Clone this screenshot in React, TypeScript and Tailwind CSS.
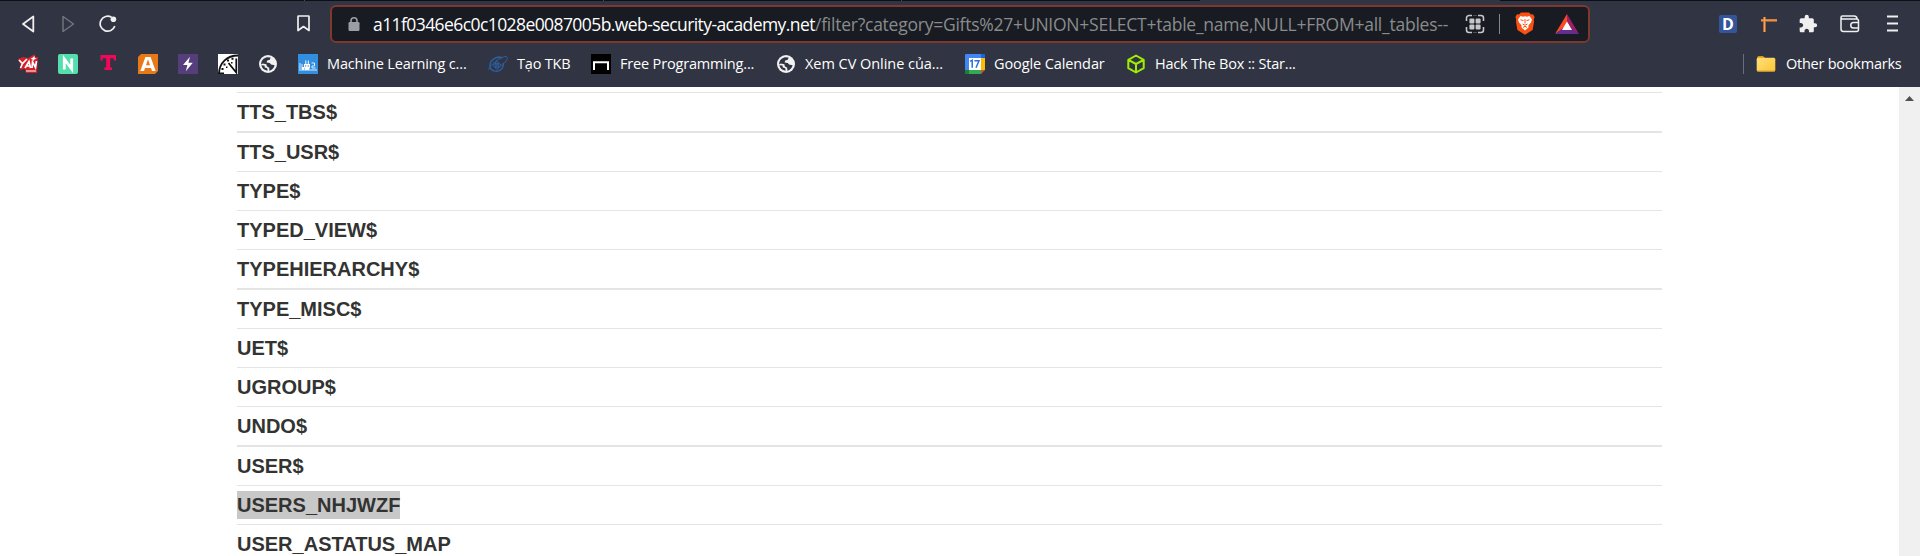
import React from "react";

const ui = "font-['Open_Sans','Noto_Sans',sans-serif]";

function Globe() {
  return (
    <svg width="20" height="20" viewBox="0 0 20 20" className="block">
      <circle cx="10" cy="10" r="9" fill="#f1f1f1" />
      <path d="M8.8 3.2L12.6 3.6 11.8 5.8 9.2 6.6 8.6 8.6 11.8 9 13 10.6 16.6 11.2C16 14 14 16 11.4 16.8L11.2 13.8 8.8 12.2 8.4 10.2 4.8 9.6 3.1 10.4C3.2 6.4 5.6 4 8.8 3.2Z" fill="#313442" />
      <path d="M3.3 11.2C4 14 6.2 16.2 9.6 16.8L9.2 14.2 6.8 13.4 6.4 11.4Z" fill="#313442" />
    </svg>
  );
}

function Yan() {
  return (
    <svg width="20" height="20" viewBox="0 0 20 20" className="block">
      <path d="M0 5L5 3 10 4 17 0 16 3 20 3 19 19 8 19 7 15 1 16 3 12Z" fill="#d3202b" />
      <path d="M1 6L4.5 9.5 9 5M4.5 9.5L2.5 14M7 14L11 7.500 12.500 14M8.500 12H12M14 14L14.500 8 17.500 13.500 18.500 7" fill="none" stroke="#fff" strokeWidth="1.7" />
      <path d="M12.500 4.500L15 3.500 16.500 1.500 16.800 4 18.800 4.800 16.200 5.600 15 7.400 14.500 5.200ZM8 16.600H18V17.600H8Z" fill="#fff" />
    </svg>
  );
}
function LetterN() {
  return (
    <svg width="20" height="20" viewBox="0 0 20 20" className="block">
      <rect width="20" height="20" rx="2" fill="#55dfad" />
      <path d="M6.300 15.500V5L13.700 15V4.500" fill="none" stroke="#fff" strokeWidth="2.8" />
    </svg>
  );
}
function MarkT() {
  return (
    <svg width="20" height="20" viewBox="0 0 20 20" className="block">
      <path d="M2.500 1H18V6.500H15.800V4.300H12.200V13.500H14V16H6.400V13.500H8.200V4.300H4.600V6.500H2.500Z" fill="#f50658" />
    </svg>
  );
}
function MarkA() {
  return (
    <svg width="20" height="20" viewBox="0 0 20 20" className="block">
      <path d="M3 0H20V17L17 20H0V3Z" fill="#e97817" />
      <path d="M6 17H2.300L7.400 3H12.600L17.700 17H14L13 14H7ZM8 11.200H12L10 5.200Z" fill="#fff" fillRule="evenodd" />
    </svg>
  );
}
function Bolt() {
  return (
    <svg width="20" height="20" viewBox="0 0 20 20" className="block">
      <rect width="20" height="20" fill="#563d7c" />
      <path d="M12 2.800L5 11H9.400L7.800 17.200 14.800 8.800H10.400Z" fill="#fff" />
    </svg>
  );
}
function Dial() {
  return (
    <svg width="20" height="20" viewBox="0 0 20 20" className="block">
      <rect width="20" height="20" fill="#fff" />
      <path d="M1 20C1 9 9 1.500 20 1.500" fill="none" stroke="#111" strokeWidth="1.8" />
      <path d="M10.500 9L18.300 18.500V4.500" fill="none" stroke="#111" strokeWidth="1.8" />
      <path d="M5.500 9.500H7.500V11.500H5.500ZM9 5.500H11V7.500H9ZM13.500 3.700H15.500V5.700H13.500ZM3.500 14H5.500V16H3.500ZM8 12.500H9.500V14H8ZM13 8H14.500V9.500H13ZM0 18.500H6V20H0Z" fill="#111" />
    </svg>
  );
}
function Robots() {
  return (
    <svg width="20" height="20" viewBox="0 0 20 20" className="block">
      <rect width="20" height="20" fill="#328fe0" />
      <path d="M2 9V15M4 10V15M13.500 9H16.500V12H14V14H17.500M1 16H19" stroke="#d9ecfc" strokeWidth="1" fill="none" />
      <path d="M6 10H12V13L11 16H7L6 13ZM7.300 6.500H8.300V10H7.300ZM9.800 6.500H10.800V10H9.800ZM4 13H6V16H4Z" fill="#fff" />
      <circle cx="7.700" cy="12" r=".7" fill="#328fe0" /><circle cx="10.300" cy="12" r=".7" fill="#328fe0" />
    </svg>
  );
}
function Orbit() {
  return (
    <svg width="20" height="20" viewBox="0 0 20 20" className="block" fill="none" stroke="#2d5f9f">
      <path d="M14.500 4.200C9 1 2 6 2 11.500 2 17 9 19 13 15.500 15 13.800 15.500 11.500 15 9" strokeWidth="1.500" />
      <path d="M1 16C-1 13 15 0 19 3 20.500 4.500 17 9 13 12" strokeWidth="1" />
      <ellipse cx="9" cy="11.300" rx="4" ry="2" strokeWidth="1" />
      <ellipse cx="9" cy="11.300" rx="2" ry="4" strokeWidth="1" />
      <circle cx="9" cy="11.300" r="1" />
    </svg>
  );
}
function Desk() {
  return (
    <svg width="20" height="20" viewBox="0 0 20 20" className="block">
      <rect width="20" height="20" fill="#000" />
      <path d="M3 16V8.300H17V16" fill="none" stroke="#fff" strokeWidth="2" />
    </svg>
  );
}
function Calendar() {
  return (
    <svg width="20" height="20" viewBox="0 0 20 20" className="block">
      <rect width="20" height="20" rx="1" fill="#4285f4" />
      <rect x="16" width="4" height="4" fill="#1967d2" />
      <rect x="16" y="4" width="4" height="12" fill="#fbbc04" />
      <rect y="16" width="16" height="4" fill="#34a853" />
      <rect y="16" width="4" height="4" fill="#188038" />
      <path d="M16 16H20L16 20Z" fill="#ea4335" />
      <path d="M20 16V20H16Z" fill="#313442" />
      <rect x="4" y="4" width="12" height="12" fill="#fff" />
      <path d="M5 7.400L7.200 6.300V13.800M9.400 6.800H14L11 13.800" fill="none" stroke="#2b6fd8" strokeWidth="1.500" />
    </svg>
  );
}
function Cube() {
  return (
    <svg width="20" height="20" viewBox="0 0 20 20" className="block" fill="none" stroke="#9fef00" strokeWidth="2" strokeLinejoin="round">
      <path d="M10 1.500L17.700 5.800V14.200L10 18.500 2.300 14.200V5.800ZM2.300 5.800L10 10 17.700 5.800M10 10V18.500" />
    </svg>
  );
}
function Folder() {
  return (
    <svg width="20" height="20" viewBox="0 0 20 20" className="block">
      <defs><linearGradient id="fold" x2="1" y2="1"><stop stopColor="#ffe07a" /><stop offset="1" stopColor="#fcc535" /></linearGradient></defs>
      <path d="M1 4Q1 2 3 2H7L9 4H17V8H1Z" fill="#dd9b0b" />
      <rect x=".7" y="3.800" width="18.600" height="13.700" rx="1.500" fill="url(#fold)" />
      <path d="M1.500 17H18.500" stroke="#d9a32a" />
    </svg>
  );
}

const icons = [Yan, LetterN, MarkT, MarkA, Bolt, Dial, Globe];
const bookmarks = [
  { Icon: Robots, label: "Machine Learning c...", cell: "w-[190px]", sp: "tracking-[-0.14px]" },
  { Icon: Orbit, label: "Tạo TKB", cell: "w-[103px]", sp: "tracking-[-0.2px]" },
  { Icon: Desk, label: "Free Programming...", cell: "w-[185px]", sp: "tracking-[-0.17px]" },
  { Icon: Globe, label: "Xem CV Online của...", cell: "w-[189px]", sp: "tracking-[-0.04px]" },
  { Icon: Calendar, label: "Google Calendar", cell: "w-[161px]", sp: "tracking-[-0.1px]" },
  { Icon: Cube, label: "Hack The Box :: Star...", cell: "w-[190px]", sp: "tracking-[-0.2px]" },
];

const rows = [
  { name: "TTS_TBS$", cls: "h-[39px] border-t" },
  { name: "TTS_USR$", cls: "h-[40px] border-t-2" },
  { name: "TYPE$", cls: "h-[39px] border-t" },
  { name: "TYPED_VIEW$", cls: "h-[39px] border-t" },
  { name: "TYPEHIERARCHY$", cls: "h-[39px] border-t" },
  { name: "TYPE_MISC$", cls: "h-[40px] border-t-2" },
  { name: "UET$", cls: "h-[39px] border-t" },
  { name: "UGROUP$", cls: "h-[39px] border-t" },
  { name: "UNDO$", cls: "h-[39px] border-t" },
  { name: "USER$", cls: "h-[40px] border-t-2" },
  { name: "USERS_NHJWZF", cls: "h-[39px] border-t", selected: true },
  { name: "USER_ASTATUS_MAP", cls: "h-[39px] border-t" },
];

function AddressBar() {
  return (
    <div className="flex h-[38px] w-[1260px] shrink-0 items-center rounded-[6px] border-2 border-[#7b392f] bg-[#181b22]">
      <svg width="12" height="14" viewBox="0 0 12 14" className="ml-[16px] shrink-0">
        <path d="M3 6V3.800a3 3 0 016 0V6" fill="none" stroke="#9c9ea6" strokeWidth="1.600" />
        <rect x=".5" y="5" width="11" height="9" rx="1.200" fill="#9c9ea6" />
      </svg>
      <div className={`ml-[13px] flex h-[30px] w-[1091px] shrink-0 items-center whitespace-pre text-[17.5px] leading-[30px] ${ui}`}>
        <span className="w-[442px] shrink-0 tracking-[-0.58px] text-white">a11f0346e6c0c1028e0087005b.web-security-academy.net</span>
        <span className="tracking-[-0.24px] text-[#8a8b8c]">/filter?category=Gifts%27+UNION+SELECT+table_name,NULL+FROM+all_tables--</span>
      </div>
      <svg width="20" height="20" viewBox="0 0 20 20" className="ml-[1px] shrink-0">
        <path d="M1.500 7V4a2.500 2.500 0 012.500-2.500H7M13 1.500H16a2.500 2.500 0 012.500 2.500V7M18.500 13V16a2.500 2.500 0 01-2.500 2.500H13M7 18.500H4a2.500 2.500 0 01-2.500-2.500V13" fill="none" stroke="#c6c7c9" strokeWidth="1.600" />
        <path d="M8.700 1.500H9.300M10.700 1.500H11.300M8.700 18.500H9.300M10.700 18.500H11.300" stroke="#c6c7c9" strokeWidth="1.200" />
        <g fill="#c6c7c9">
          <rect x="4.400" y="4.400" width="5" height="5" rx="1" />
          <rect x="10.600" y="4.400" width="5" height="5" rx="1" />
          <rect x="4.400" y="10.600" width="5" height="5" rx="1" />
          <rect x="10.600" y="10.600" width="5" height="5" rx="1" />
        </g>
      </svg>
      <div className="ml-[14px] h-5 w-px shrink-0 bg-[#85878c]" />
      <svg width="20" height="23" viewBox="0 0 20 23" className="ml-[15px] shrink-0">
        <path d="M6 .5H14L16 2.500 18 2.300 19.600 5 18.800 7.500 19 10 17.600 18 10 22.700 2.400 18 1 10 1.200 7.500 .4 5 2 2.300 4 2.500Z" fill="#fb5012" />
        <path d="M5.500 4L8 4.800 10 4.200 12 4.800 14.500 4 17 7.500 16 10.500 13.500 13.200 13.500 15.500 10 18.500 6.500 15.500 6.500 13.200 4 10.500 3 7.500Z" fill="#fff" />
        <path d="M5.500 7.800L8.500 8.600M14.500 7.800L11.500 8.600M10 7V11.500M7.500 12L10 13.200 12.500 12M8 15.500L10 14.200 12 15.500" fill="none" stroke="#fb5012" strokeWidth="1" />
      </svg>
      <svg width="24" height="20" viewBox="0 0 24 20" className="ml-[20px] shrink-0">
        <path d="M12 0L0 20 12 12Z" fill="#ff4724" />
        <path d="M12 0L24 20 12 12Z" fill="#9e1f63" />
        <path d="M0 20H24L12 11Z" fill="#662d91" />
        <path d="M12 7.500L17 16H7Z" fill="#fff" />
      </svg>
    </div>
  );
}

export default function App() {
  return (
    <div className="flex h-[556px] w-[1920px] flex-col overflow-hidden bg-white">
      <header className="flex h-[87px] shrink-0 flex-col bg-[#313442]">
        <div className="flex h-px shrink-0 bg-[#0d0f16]">
          <div className="ml-[304px] w-px bg-[#4a4c55]" />
          <div className="ml-[298px] w-px bg-[#4a4c55]" />
          <div className="ml-[297px] w-px bg-[#4a4c55]" />
          <div className="ml-[298px] w-[300px] bg-[#313442]" />
        </div>
        <div className="flex h-[45px] shrink-0 items-center">
          <svg width="13" height="18" viewBox="0 0 13 18" className="ml-[22px]" fill="none" stroke="#f0f0f1" strokeWidth="1.800" strokeLinejoin="round">
            <path d="M11.300 1.500V16.500L1 9Z" />
          </svg>
          <svg width="13" height="18" viewBox="0 0 13 18" className="ml-[27px]" fill="none" stroke="#747681" strokeWidth="1.400" strokeLinejoin="round">
            <path d="M1 1.500V16.500L11.500 9Z" />
          </svg>
          <svg width="18" height="18" viewBox="0 0 18 18" className="ml-[24px]">
            <path d="M12.600 2.300A7.500 7.500 0 1015.800 11" fill="none" stroke="#f0f0f1" strokeWidth="1.700" />
            <circle cx="14.400" cy="4.300" r="2.800" fill="#f0f0f1" />
          </svg>
          <svg width="13" height="17" viewBox="0 0 13 17" className="ml-[180px]" fill="none" stroke="#f0f0f1" strokeWidth="1.700" strokeLinejoin="round">
            <path d="M1 1.500Q1 1 1.500 1H11.500Q12 1 12 1.500V15.500L6.500 11.500 1 15.500Z" />
          </svg>
          <div className="ml-[20px]"><AddressBar /></div>
          <div className={`ml-[129px] flex size-[18px] items-center justify-center rounded-[2px] bg-[#35559a] text-[16px] font-bold leading-[18px] text-white ${ui}`}>D</div>
          <svg width="18" height="18" viewBox="0 0 18 18" className="ml-[23px]">
            <path d="M4.500 2V17M1 5.500H17" stroke="#a95f27" strokeWidth="3" fill="none" />
            <path d="M4.500 2V17M1 5.200H17" stroke="#f0a864" strokeWidth="1.300" fill="none" />
          </svg>
          <svg width="20" height="20" viewBox="0 0 24 24" className="ml-[20px]">
            <path d="M20.500 11H19V7c0-1.100-.9-2-2-2h-4V3.500a2.500 2.500 0 00-5 0V5H4c-1.100 0-1.990.9-1.990 2v3.800H3.500c1.490 0 2.700 1.210 2.700 2.700s-1.210 2.700-2.700 2.700H2V20c0 1.100.9 2 2 2h3.800v-1.500c0-1.490 1.210-2.700 2.700-2.700 1.490 0 2.700 1.210 2.700 2.700V22H17c1.100 0 2-.9 2-2v-4h1.500a2.500 2.500 0 000-5z" fill="#f0f0f1" />
          </svg>
          <svg width="20" height="18" viewBox="0 0 20 18" className="ml-[22px]" fill="none" stroke="#f0f0f1" strokeWidth="1.500">
            <path d="M1 2.500Q1 1 2.500 1H14Q17 1 17 4M1 2.500V14Q1 16.500 3.500 16.500H16.500Q18.500 16.500 18.500 14.500V6Q18.500 4 16.500 4H2.500Q1 4 1 2.500M19 7.500H13.500A2.700 2.700 0 0013.500 13H19" />
          </svg>
          <svg width="11" height="17" viewBox="0 0 11 17" className="ml-[27px]" stroke="#f0f0f1" strokeWidth="2">
            <path d="M0 1.500H11M0 8.500H11M0 15.500H11" />
          </svg>
        </div>
        <div className="flex h-[36px] shrink-0 items-center">
          <div className="ml-[18px] flex w-[280px] shrink-0 gap-5">
            {icons.map((Icon, i) => <Icon key={i} />)}
          </div>
          {bookmarks.map(({ Icon, label, cell, sp }) => (
            <div key={label} className={`flex shrink-0 items-center gap-[9px] ${cell}`}>
              <Icon />
              <span className={`whitespace-nowrap text-[14.5px] leading-5 text-white ${ui} ${sp}`}>{label}</span>
            </div>
          ))}
          <div className="ml-[427px] h-5 w-px shrink-0 bg-[#6b6e79]" />
          <div className="ml-[12px] flex shrink-0 items-center gap-[10px]">
            <Folder />
            <span className={`whitespace-nowrap text-[14.5px] leading-5 tracking-[-0.24px] text-white ${ui}`}>Other bookmarks</span>
          </div>
        </div>
      </header>
      <main className="flex min-h-0 flex-1 justify-between">
        <div className="ml-[237px] mt-[5px] w-[1425px]">
          {rows.map((r) => (
            <div key={r.name} className={`flex items-start border-[#e4e4e4] pt-[5px] ${r.cls}`}>
              <span className={`h-[28px] font-['Liberation_Sans',Arial,sans-serif] text-[20px] font-bold leading-[28px] text-[#333332] ${r.selected ? "bg-[#c8c8c8]" : ""}`}>{r.name}</span>
            </div>
          ))}
        </div>
        <div className="flex w-[21px] shrink-0 justify-center bg-[#f0f0f0] pt-[9px]">
          <svg width="9" height="5" viewBox="0 0 9 5"><path d="M0 5L4.500 0L9 5Z" fill="#505050" /></svg>
        </div>
      </main>
    </div>
  );
}
